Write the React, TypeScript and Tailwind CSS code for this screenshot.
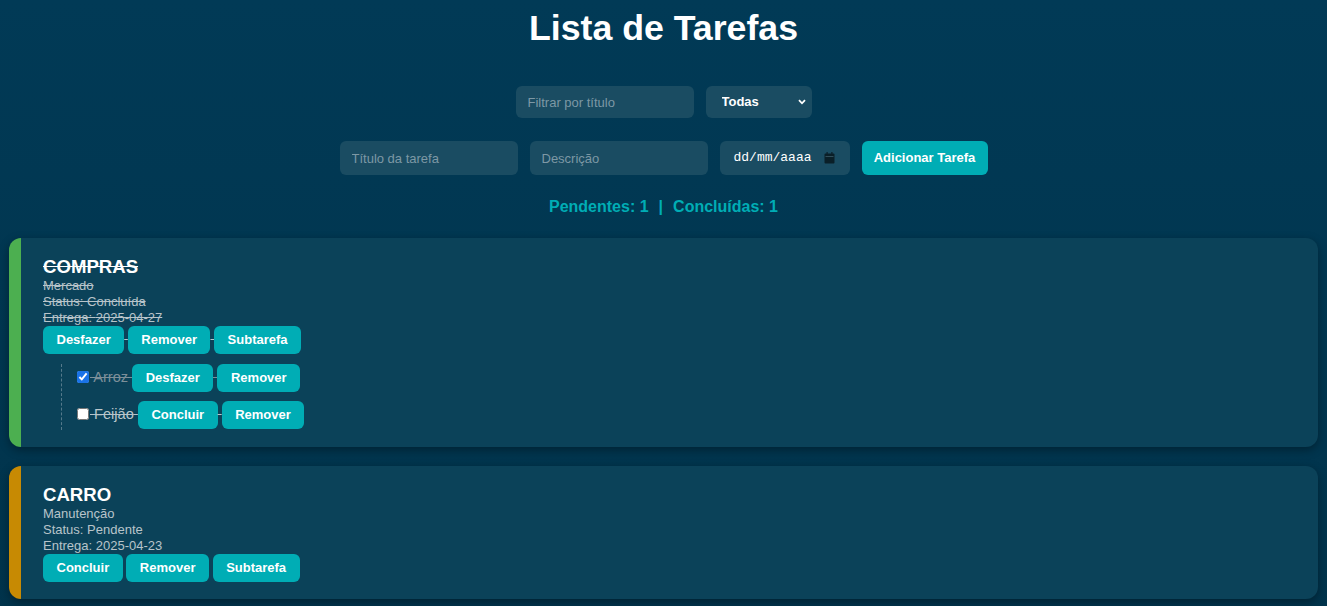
import React from 'react';

type Subtask = { title: string; done: boolean };
type Task = {
  title: string;
  description: string;
  due: string;
  done: boolean;
  subtasks: Subtask[];
};

const tasks: Task[] = [
  {
    title: 'COMPRAS',
    description: 'Mercado',
    due: '2025-04-27',
    done: true,
    subtasks: [
      { title: 'Arroz', done: true },
      { title: 'Feijão', done: false },
    ],
  },
  {
    title: 'CARRO',
    description: 'Manutenção',
    due: '2025-04-23',
    done: false,
    subtasks: [],
  },
];

const btn =
  'inline-block h-7 rounded-md bg-[#00adb5] px-[13.5px] py-[6px] text-[13px] font-bold leading-4 text-white no-underline align-baseline';

function CalendarIcon() {
  return (
    <svg width="11" height="12" viewBox="0 0 11 12" aria-hidden="true">
      <rect x="0.5" y="1.5" width="10" height="10" rx="1" fill="#0a1f28" />
      <rect x="1.5" y="4" width="8" height="0.8" fill="#3b5a67" />
      <rect x="2.5" y="0" width="1.2" height="2.5" fill="#0a1f28" />
      <rect x="7.3" y="0" width="1.2" height="2.5" fill="#0a1f28" />
    </svg>
  );
}

function TaskCard({ task }: { task: Task }) {
  return (
    <div
      className={`mx-[9px] mb-[19px] rounded-xl border-l-[12px] bg-[#0b4259] pb-[17px] pl-[22px] pr-5 pt-[17px] shadow-[0_3px_10px_rgba(0,0,0,0.35)] ${
        task.done ? 'border-[#4caf50]' : 'border-[#c78a03]'
      }`}
    >
      <div className={task.done ? 'line-through decoration-[#b8c4ca]' : ''}>
        <h3 className={`text-[18.6px] font-bold leading-[23px] text-white ${task.done ? 'line-through decoration-white' : ''}`}>
          {task.title}
        </h3>
        <p className="text-[13px] leading-4 text-[#b8c4ca]">{task.description}</p>
        <p className="text-[13px] leading-4 text-[#b8c4ca]">Status: {task.done ? 'Concluída' : 'Pendente'}</p>
        <p className="text-[13px] leading-4 text-[#b8c4ca]">Entrega: {task.due}</p>
        <div className="text-[13px] leading-4 text-[#b8c4ca]">
          <button className={btn}>{task.done ? 'Desfazer' : 'Concluir'}</button>{' '}
          <button className={btn}>Remover</button>{' '}
          <button className={btn}>Subtarefa</button>
        </div>
        {task.subtasks.length > 0 && (
          <ul className="ml-[18px] mt-[10px] space-y-[9px] border-l border-dashed border-[#557a8b] pb-px pl-[11px]">
            {task.subtasks.map(s => (
              <li
                key={s.title}
                className={`text-[14.6px] leading-4 ${s.done ? 'text-[#7d8f99] line-through decoration-[#7d8f99]' : 'text-[#bcc7cc]'}`}
              >
                <input
                  type="checkbox"
                  defaultChecked={s.done}
                  className="ml-1 mr-[1px] h-[12px] w-[12px] align-[-1px] accent-[#1a73e8]"
                />{' '}
                {s.title}{' '}
                <button className={btn}>{s.done ? 'Desfazer' : 'Concluir'}</button>{' '}
                <button className={btn}>Remover</button>
              </li>
            ))}
          </ul>
        )}
      </div>
    </div>
  );
}

export default function App() {
  const pending = tasks.filter(t => !t.done).length;
  const done = tasks.filter(t => t.done).length;

  return (
    <div className="min-h-screen bg-gradient-to-b from-[#013a56] to-[#01334b] pb-2 font-['Liberation_Sans',Arial,sans-serif] text-white">
      <h1 className="pt-[7px] text-center text-[35.7px] font-bold leading-[42px]">Lista de Tarefas</h1>

      {/* Filter */}
      <div className="mt-[37px] flex justify-center gap-3">
        <input
          placeholder="Filtrar por título"
          className="h-8 w-[178px] rounded-md bg-[#1a4c62] px-3 text-[13px] text-white outline-none placeholder:text-[#7d98a5]"
        />
        <div className="relative">
          <select className="h-8 w-[106px] appearance-none rounded-md bg-[#1a4c62] pl-4 text-[13px] font-bold text-white outline-none">
            <option>Todas</option>
            <option>Pendentes</option>
            <option>Concluídas</option>
          </select>
          <svg
            className="pointer-events-none absolute right-[6px] top-[13px]"
            width="8"
            height="6"
            viewBox="0 0 8 6"
            aria-hidden="true"
          >
            <path d="M1 1.2 L4 4.3 L7 1.2" fill="none" stroke="white" strokeWidth="1.8" />
          </svg>
        </div>
      </div>

      {/* New task */}
      <div className="mt-[23px] flex justify-center gap-3">
        <input
          placeholder="Título da tarefa"
          className="h-[34px] w-[178px] rounded-md bg-[#1a4c62] px-3 text-[13px] text-white outline-none placeholder:text-[#7d98a5]"
        />
        <input
          placeholder="Descrição"
          className="h-[34px] w-[178px] rounded-md bg-[#1a4c62] px-3 text-[13px] text-white outline-none placeholder:text-[#7d98a5]"
        />
        <div className="flex h-[34px] w-[130px] items-center justify-between rounded-md bg-[#1a4c62] pl-[14px] pr-[15px]">
          <span className="font-['Liberation_Mono',monospace] text-[13px] text-white">dd/mm/aaaa</span>
          <CalendarIcon />
        </div>
        <button className="h-[34px] w-[126px] rounded-md bg-[#00adb5] text-[13px] font-bold text-white">
          Adicionar Tarefa
        </button>
      </div>

      {/* Stats */}
      <div className="mt-[22px] text-center text-[16px] font-bold leading-5 text-[#00adb5]">
        <span>Pendentes: {pending}</span>
        <span className="mx-[10px]">|</span>
        <span>Concluídas: {done}</span>
      </div>

      <div className="mt-[21px]">
        {tasks.map(t => (
          <TaskCard key={t.title} task={t} />
        ))}
      </div>
    </div>
  );
}
